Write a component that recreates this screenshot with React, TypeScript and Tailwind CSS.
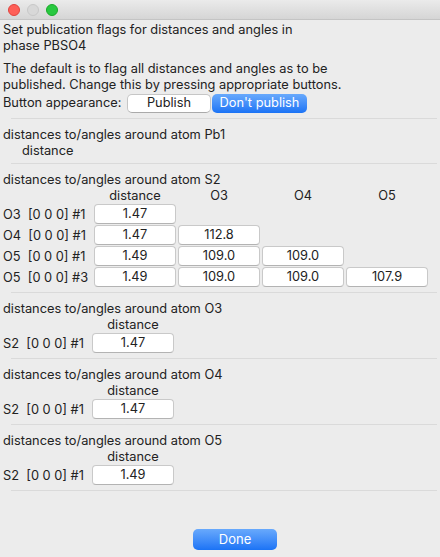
import React from "react";

type Row = { label: string; values: string[] };

const font = { fontFamily: 'Inter, "Liberation Sans", Arial, sans-serif' };

function Separator() {
  return <div className="ml-[8px] h-px bg-[#dadada]" />;
}

function ValueBox({ value }: { value: string }) {
  return (
    <div className="flex h-[20px] items-center justify-center rounded-[4px] border border-[#c9c9c9] border-b-[#b3b3b3] bg-white pt-[1px] leading-none text-[#222]">
      {value}
    </div>
  );
}

function AtomSection({
  atom,
  headers,
  rows,
  cols,
}: {
  atom: string;
  headers: string[];
  rows: Row[];
  cols: string;
}) {
  return (
    <div className="pt-[7px] pb-[5px]">
      <div className="h-[16px] leading-[18px]">distances to/angles around atom {atom}</div>
      <div className={`grid ${cols} gap-x-[2px] gap-y-[1px]`}>
        <div className="h-[16px]" />
        {headers.map((h, i) => (
          <div key={i} className="h-[16px] text-center leading-[18px]">
            {h}
          </div>
        ))}
        {Array.from({ length: 4 - headers.length }).map((_, i) => (
          <div key={"e" + i} />
        ))}
        {rows.map((r) => (
          <React.Fragment key={r.label}>
            <div className="h-[20px] whitespace-pre pt-[1px] leading-[20px]">{r.label}</div>
            {[0, 1, 2, 3].map((i) =>
              r.values[i] ? <ValueBox key={i} value={r.values[i]} /> : <div key={i} />
            )}
          </React.Fragment>
        ))}
      </div>
    </div>
  );
}

export default function App() {
  return (
    <div
      className="flex h-[557px] w-[440px] flex-col overflow-hidden bg-[#ececec] text-[12.8px] text-[#222]"
      style={font}
    >
      {/* title bar */}
      <div className="flex h-[20px] shrink-0 items-center gap-[7px] border-b border-[#c4c4c4] bg-gradient-to-b from-[#ebebeb] to-[#d5d5d5] pl-[8px]">
        <span className="h-[12px] w-[12px] rounded-full border border-[#e0443e] bg-[#fe5f57]" />
        <span className="h-[12px] w-[12px] rounded-full border border-[#c8c8c8] bg-[#d8d8d8]" />
        <span className="h-[12px] w-[12px] rounded-full border border-[#1aab29] bg-[#28c840]" />
      </div>

      <div className="flex flex-1 flex-col px-[3px] pt-[2px]">
        <p className="leading-[16px]">
          Set publication flags for distances and angles in
          <br />
          phase PBSO4
        </p>
        <p className="mt-[7px] leading-[16px]">
          The default is to flag all distances and angles as to be
          <br />
          published. Change this by pressing appropriate buttons.
        </p>
        <div className="flex h-[20px] items-center">
          <span className="w-[124px]">Button appearance:</span>
          <button className="h-[19px] w-[84px] rounded-[5px] border border-[#c6c6c6] border-b-[#aaaaaa] bg-white leading-none text-[#222]">
            Publish
          </button>
          <button className="ml-[1px] h-[19px] w-[95px] rounded-[5px] bg-gradient-to-b from-[#68a9fc] to-[#1a73f5] leading-none text-white">
            Don't publish
          </button>
        </div>
        <div className="mt-[5px]">
          <Separator />
        </div>

        <div className="pt-[7px] pb-[5px]">
          <div className="h-[16px] leading-[18px]">distances to/angles around atom Pb1</div>
          <div className="h-[16px] pl-[19px] leading-[18px]">distance</div>
        </div>
        <Separator />

        <AtomSection
          atom="S2"
          cols="grid-cols-[89px_82px_82px_82px_82px]"
          headers={["distance", "O3", "O4", "O5"]}
          rows={[
            { label: "O3  [0 0 0] #1", values: ["1.47"] },
            { label: "O4  [0 0 0] #1", values: ["1.47", "112.8"] },
            { label: "O5  [0 0 0] #1", values: ["1.49", "109.0", "109.0"] },
            { label: "O5  [0 0 0] #3", values: ["1.49", "109.0", "109.0", "107.9"] },
          ]}
        />
        <Separator />
        <AtomSection
          atom="O3"
          cols="grid-cols-[87px_82px_82px_82px_82px]"
          headers={["distance"]}
          rows={[{ label: "S2  [0 0 0] #1", values: ["1.47"] }]}
        />
        <Separator />
        <AtomSection
          atom="O4"
          cols="grid-cols-[87px_82px_82px_82px_82px]"
          headers={["distance"]}
          rows={[{ label: "S2  [0 0 0] #1", values: ["1.47"] }]}
        />
        <Separator />
        <AtomSection
          atom="O5"
          cols="grid-cols-[87px_82px_82px_82px_82px]"
          headers={["distance"]}
          rows={[{ label: "S2  [0 0 0] #1", values: ["1.49"] }]}
        />
        <Separator />

        <div className="mt-auto flex justify-center pb-[7px] pl-[30px]">
          <button className="h-[21px] w-[84px] rounded-[5px] bg-gradient-to-b from-[#68a9fc] to-[#1a73f5] text-[13px] leading-none text-white">
            Done
          </button>
        </div>
      </div>
    </div>
  );
}
